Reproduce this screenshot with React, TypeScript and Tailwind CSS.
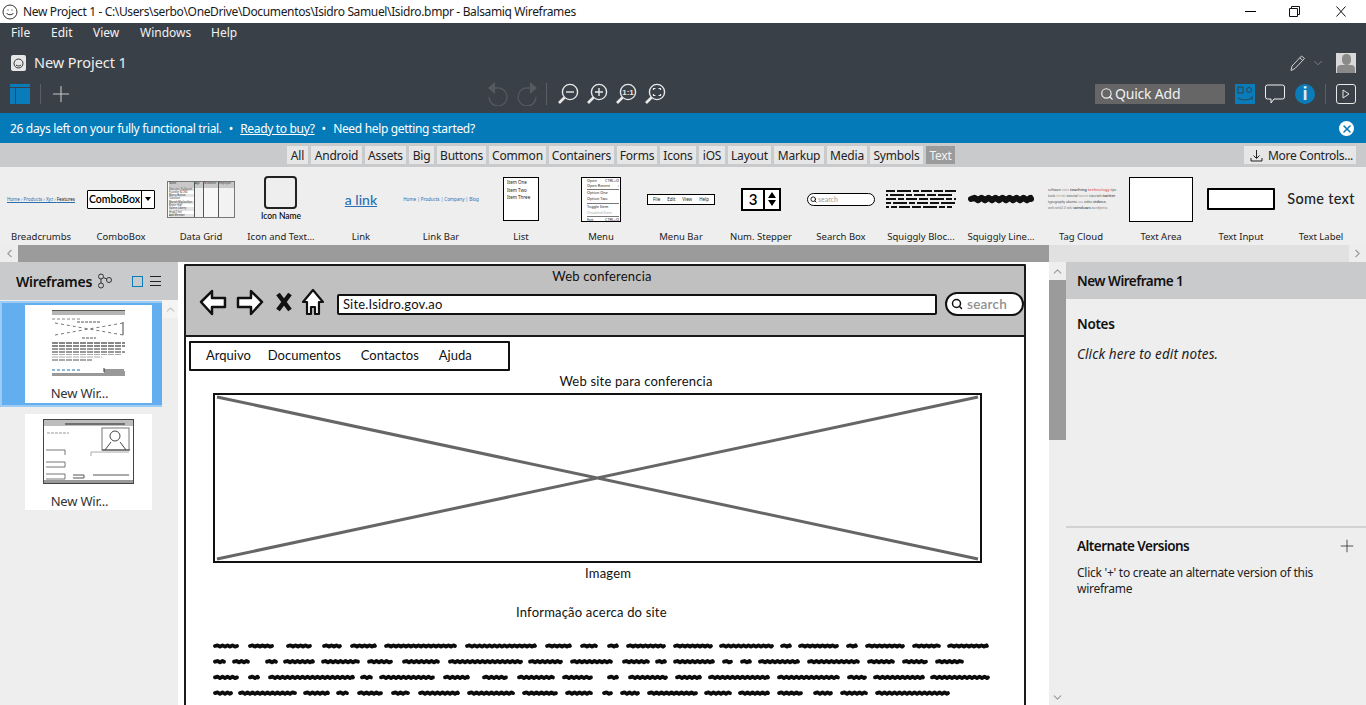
import { Search, Plus, ChevronUp, ChevronDown, ChevronLeft, ChevronRight, X } from "lucide-react";

const ui = "font-['Noto_Sans','Open_Sans',sans-serif]";
const sketch = "font-['Lato','Noto_Sans',sans-serif]";

const tabs = [
  ["All", 21],
  ["Android", 51],
  ["Assets", 41],
  ["Big", 25],
  ["Buttons", 49],
  ["Common", 57],
  ["Containers", 65],
  ["Forms", 40],
  ["Icons", 36],
  ["iOS", 26],
  ["Layout", 43],
  ["Markup", 50],
  ["Media", 40],
  ["Symbols", 53],
];

// start/end x of every squiggly word, measured from the left of the text block, one list per line
const squiggleLines = [
  [[0, 26], [35, 61], [73, 99], [109, 129], [137, 164], [171, 244], [252, 324], [332, 359], [367, 385], [394, 406], [413, 453], [460, 500], [506, 561], [567, 579], [585, 626], [633, 645], [652, 692], [699, 728], [734, 776]],
  [[0, 13], [19, 37], [52, 65], [70, 102], [108, 147], [154, 180], [189, 227], [235, 310], [315, 350], [357, 400], [409, 437], [442, 454], [460, 502], [509, 520], [527, 539], [545, 587], [594, 647], [654, 682], [689, 715], [722, 751]],
  [[0, 26], [35, 47], [55, 142], [147, 160], [166, 222], [230, 257], [269, 295], [304, 342], [349, 380], [394, 406], [415, 455], [462, 489], [495, 557], [564, 627], [634, 654], [660, 712], [717, 777]],
  [[0, 20], [25, 84], [90, 117], [123, 136], [144, 170], [178, 197], [205, 247], [254, 302], [309, 345], [352, 380], [389, 400], [407, 427], [434, 485], [491, 519], [525, 557], [564, 590], [600, 620], [627, 655], [662, 737]],
];

function wavePath(x0: number, x1: number, y: number, step: number, amp: number) {
  let d = `M${x0} ${y}`;
  let up = true;
  for (let x = x0 + step; x < x1; x += step) {
    d += ` L${x} ${up ? y - amp : y + amp}`;
    up = !up;
  }
  return d + ` L${x1} ${y}`;
}

function SquigglyText() {
  return (
    <svg width="780" height="58" className="block" fill="none" stroke="#0c0c0c" strokeWidth="3.800" strokeLinecap="round" strokeLinejoin="round">
      {squiggleLines.map((words, i) =>
        words.map(([a, b], j) => <path key={`${i}-${j}`} d={wavePath(a + 2, b - 2, 5 + i * 15.700, 2.500, 0.700)} />)
      )}
    </svg>
  );
}

function MagGlass({ kind }: { kind: "minus" | "plus" | "one" | "fit" }) {
  return (
    <svg width="22" height="22" viewBox="0 0 22 22" fill="none" stroke="#e8e8e8" strokeWidth="1.400">
      <circle cx="13" cy="9" r="7.600" />
      <path d="M7.500 14.500 L2 20" strokeWidth="2.600" />
      {kind === "minus" && <path d="M9 9h8" />}
      {kind === "plus" && <path d="M9 9h8M13 5v8" />}
      {kind === "one" && <text x="13" y="12" textAnchor="middle" fontSize="8" fontWeight="700" fill="#e8e8e8" stroke="none" fontFamily="Liberation Sans">1:1</text>}
      {kind === "fit" && <path d="M9.500 7V5.500H11.500M14.500 5.500H16.500V7M16.500 11V12.500H14.500M11.500 12.500H9.500V11" strokeWidth="1.200" />}
    </svg>
  );
}

function TopBars() {
  return (
    <>
      {/* window title bar */}
      <div className={`${ui} h-[23px] bg-white flex items-center text-[12px] text-[#1a1a1a]`}>
        <svg width="16" height="16" viewBox="0 0 16 16" className="ml-[2px] mr-[5px]" fill="none" stroke="#333">
          <circle cx="8" cy="8" r="7" />
          <path d="M4.500 9c1.200 2.300 5.800 2.300 7 0" />
          <path d="M5.500 6h1M9.500 6h1" />
        </svg>
        <span className="tracking-[-0.36px]">New Project 1 - C:\Users\serbo\OneDrive\Documentos\Isidro Samuel\Isidro.bmpr - Balsamiq Wireframes</span>
        <div className="ml-auto flex items-center mr-[20px]">
          <div className="w-[11px] h-px bg-black mr-[33px]" />
          <svg width="11" height="11" viewBox="0 0 11 11" fill="none" stroke="#111" className="mr-[36px]">
            <path d="M.5 2.500h8v8h-8zM2.500 2.500v-2h8v8h-2" />
          </svg>
          <svg width="10" height="11" viewBox="0 0 10 11" fill="none" stroke="#111">
            <path d="M.5 .5l9 10M9.500 .5l-9 10" />
          </svg>
        </div>
      </div>

      {/* dark application chrome */}
      <div className={`${ui} h-[90px] bg-[#3a4047] text-white relative`}>
        <div className="flex h-[20px] items-center text-[12px] pl-[11px] text-[#f2f2f2]">
          <span className="w-[40px]">File</span>
          <span className="w-[42px]">Edit</span>
          <span className="w-[47px]">View</span>
          <span className="w-[71px]">Windows</span>
          <span>Help</span>
        </div>
        <div className="flex h-[22px] mt-[9px] items-center pl-[11px] pr-[10px]">
          <svg width="15" height="16" viewBox="0 0 15 16" fill="none">
            <rect width="15" height="16" rx="2" fill="#e6e6e6" />
            <circle cx="7.500" cy="8.500" r="4.500" stroke="#333" />
            <path d="M5 10c1.200 1.300 3.800 1.300 5 0" stroke="#333" />
          </svg>
          <span className="ml-[8px] text-[14.500px] text-[#eeeeee] tracking-[-0.05px]">New Project 1</span>
          <svg width="18" height="18" viewBox="0 0 18 18" fill="none" stroke="#d0d0d0" className="ml-auto mr-[4px]">
            <path d="M2 16.500l1-4.500L12.500 2l3 2.500L6 14.500z" />
            <path d="M10.800 3.800l3 2.700" />
          </svg>
          <ChevronDown size={14} className="text-[#9a9a9a] mr-[11px]" strokeWidth={1.200} />
          <div className="w-[20px] h-[20px] bg-[#d8d8d8] overflow-hidden flex flex-col items-center">
            <div className="w-[9px] h-[11px] mt-[1px] rounded-full bg-[#8a8a8a]" />
            <div className="w-[18px] h-[8px] rounded-t-[4px] bg-[#8a8a8a]" />
          </div>
        </div>
        <div className="flex h-[24px] mt-[8px] items-center pl-[10px]">
          <div className="w-[20px] h-[20px] bg-[#0a7cba] flex flex-col">
            <div className="h-[4px] border-b border-[#3a4047]" />
            <div className="flex-1 flex">
              <div className="w-[6px] border-r border-[#3a4047]" />
            </div>
          </div>
          <div className="w-px h-[20px] bg-[#5b6067] ml-[10px]" />
          <Plus size={26} strokeWidth={1} className="text-[#c8c8c8] ml-[7px]" />
          <svg width="23" height="24" viewBox="0 0 23 24" fill="none" className="ml-[412px]">
            <path d="M2 6l7-6v12z" fill="#565a60" />
            <path d="M8 6h3a9 9 0 1 1-8 9" stroke="#565a60" strokeWidth="1.300" />
          </svg>
          <svg width="23" height="24" viewBox="0 0 23 24" fill="none" className="ml-[7px]">
            <path d="M21 6l-7-6v12z" fill="#565a60" />
            <path d="M15 6h-3a9 9 0 1 0 8 9" stroke="#565a60" strokeWidth="1.300" />
          </svg>
          <div className="w-px h-[22px] bg-[#5b6067] ml-[7px] mr-[10px]" />
          <div className="flex gap-[7px]">
            <MagGlass kind="minus" />
            <MagGlass kind="plus" />
            <MagGlass kind="one" />
            <MagGlass kind="fit" />
          </div>
          <div className="ml-[429px] w-[130px] h-[20px] bg-[#666666] flex items-center pl-[5px] pb-[1px] text-[#f0f0f0] text-[14px]">
            <Search size={14} strokeWidth={2} />
            <span className="ml-[1px] tracking-[-0.2px]">Quick Add</span>
          </div>
          <div className="ml-[10px] w-[20px] h-[20px] bg-[#0a7cba] relative">
            <svg width="20" height="20" viewBox="0 0 20 20" fill="none" stroke="#33404a">
              <rect x="3" y="3" width="5" height="6" />
              <circle cx="14" cy="6" r="2.500" />
              <path d="M3 14c4 2.500 9 2.500 14 0M17 12v4" />
            </svg>
          </div>
          <svg width="20" height="20" viewBox="0 0 20 20" fill="none" stroke="#f0f0f0" className="ml-[10px]">
            <path d="M2.500 1h15a2 2 0 0 1 2 2v10a2 2 0 0 1-2 2H9l-3 4v-4H2.500a2 2 0 0 1-2-2V3a2 2 0 0 1 2-2z" />
          </svg>
          <div className="ml-[10px] w-[20px] h-[20px] rounded-full bg-[#0a7cba] flex items-center justify-center text-[#dfe9f0] text-[17px] font-bold">
            i
          </div>
          <div className="w-px h-[20px] bg-[#5b6067] ml-[10px]" />
          <div className="ml-[10px] w-[20px] h-[20px] rounded-[3px] border border-[#e8e8e8] flex items-center justify-center">
            <svg width="8" height="10" viewBox="0 0 8 10" fill="none" stroke="#e8e8e8">
              <path d="M1 1l6 4-6 4z" />
            </svg>
          </div>
        </div>
      </div>

      {/* trial notice */}
      <div className={`${ui} h-[30px] bg-[#057ab9] text-white text-[12px] flex items-center pl-[10px] pr-[12px] pt-[1px]`}>
        <span className="tracking-[-0.33px]">26 days left on your fully functional trial.</span>
        <span className="mx-[7px]">•</span>
        <span className="underline tracking-[-0.33px]">Ready to buy?</span>
        <span className="mx-[7px]">•</span>
        <span className="tracking-[-0.33px]">Need help getting started?</span>
        <div className="ml-auto w-[15px] h-[15px] rounded-full bg-white flex items-center justify-center">
          <X size={12} strokeWidth={3} className="text-[#057ab9]" />
        </div>
      </div>
    </>
  );
}

const gridRows = ["Giacomo Guilizzoni", "Founder & CEO", "Marco Botton", "Tuttofare", "Mariah Maclachlan", "Better Half", "Valerie Liberty", "Head Chef", "Add Member"];

function ControlPreview({ name }: { name: string }) {
  switch (name) {
    case "Breadcrumbs":
      return (
        <div className="text-[4.500px] whitespace-nowrap text-[#2a6fb0] underline">Home › Products › Xyz › <span className="text-[#222] no-underline">Features</span></div>
      );
    case "ComboBox":
      return (
        <div className={`${sketch} flex w-[68px] h-[19px] bg-white border-[1.500px] border-black rounded-[1px] text-[10.500px] text-black font-semibold`}>
          <span className="flex-1 text-center leading-[16px]">ComboBox</span>
          <span className="w-[13px] border-l-[1.500px] border-black flex items-center justify-center">
            <span className="border-x-[3.500px] border-x-transparent border-t-[4px] border-t-black" />
          </span>
        </div>
      );
    case "Data Grid":
      return (
        <div className="w-[68px] h-[37px] bg-white border border-[#777] flex text-[2.600px] leading-[3.300px] text-[#333] whitespace-nowrap">
          <div className="w-[27px] border-r border-[#555] pl-px">
            <div className="bg-[#c8c8c8] h-[6px]">Name</div>
            {gridRows.map((r, i) => (
              <div key={r} className={i % 2 ? "bg-white" : "bg-[#e4e4e4]"}>{r}</div>
            ))}
          </div>
          <div className="w-[9px] border-r border-[#555] bg-[#f2f2f2]"><div className="bg-[#c8c8c8] h-[6px]">Age</div></div>
          <div className="w-[15px] border-r border-[#555] bg-[#f8f8f8]"><div className="bg-[#c8c8c8] h-[6px]">Nickname</div></div>
          <div className="flex-1 bg-[#f2f2f2]"><div className="bg-[#c8c8c8] h-[6px]">Employee</div></div>
        </div>
      );
    case "Icon and Text...":
      return (
        <div className={`${sketch} flex flex-col items-center mt-[-1px]`}>
          <div className="w-[33px] h-[33px] border-2 border-[#222] rounded-[4px] bg-[#eeeeee]" />
          <span className="text-[8.500px] mt-[1px] leading-[12px] text-black font-medium">Icon Name</span>
        </div>
      );
    case "Link":
      return <span className={`${sketch} text-[#2a6fb0] text-[14px] underline font-medium`}>a link</span>;
    case "Link Bar":
      return <div className="text-[4.500px] whitespace-nowrap text-[#2a6fb0]">Home | Products | Company | Blog</div>;
    case "List":
      return (
        <div className="w-[36px] h-[44px] bg-white border border-black text-[4.500px] leading-[7.500px] pl-[3px] pt-[1px] text-[#222]">
          Item One<br />Item Two<br />Item Three
        </div>
      );
    case "Menu":
      return (
        <div className="w-[40px] h-[45px] bg-white border border-black text-[3.800px] leading-[5.700px] text-[#222] pl-[5px] pr-px">
          <div className="flex justify-between"><span>Open</span><span>CTRL+O</span></div>
          <div className="flex justify-between border-b border-[#777]"><span>Open Recent</span><span>›</span></div>
          <div>Option One</div>
          <div className="border-b border-[#777] pb-[2px]">Option Two</div>
          <div>Toggle Item</div>
          <div className="text-[#aaa] border-b border-[#777]">Disabled Item</div>
          <div className="flex justify-between"><span>Exit</span><span>CTRL+Q</span></div>
        </div>
      );
    case "Menu Bar":
      return (
        <div className="w-[68px] h-[11px] bg-white border border-black text-[4.500px] text-[#222] flex items-center justify-center gap-[7px]">
          <span>File</span><span>Edit</span><span>View</span><span>Help</span>
        </div>
      );
    case "Num. Stepper":
      return (
        <div className={`${sketch} flex w-[40px] h-[23px] bg-white border-2 border-black text-[15px] font-semibold text-black`}>
          <span className="flex-1 text-center leading-[19px]">3</span>
          <span className="w-[16px] border-l-2 border-black flex flex-col items-center justify-center gap-[2px]">
            <span className="border-x-[4.500px] border-x-transparent border-b-[6px] border-b-black" />
            <span className="border-x-[4.500px] border-x-transparent border-t-[6px] border-t-black" />
          </span>
        </div>
      );
    case "Search Box":
      return (
        <div className={`${sketch} flex items-center w-[68px] h-[13px] bg-white border border-black rounded-full text-[7px] text-[#9a9a9a] pl-[2px]`}>
          <Search size={7} strokeWidth={3} className="text-black" />
          <span className="ml-px">search</span>
        </div>
      );
    case "Squiggly Bloc...":
      return (
        <svg width="70" height="20" className="block" fill="none" stroke="#111" strokeWidth="2" strokeDasharray="9 2 14 2 6 2 11 2">
          <path d="M0 2h70" strokeDashoffset="0" />
          <path d="M0 6h68" strokeDashoffset="7" />
          <path d="M0 10h70" strokeDashoffset="15" />
          <path d="M0 14h69" strokeDashoffset="4" />
          <path d="M0 18h66" strokeDashoffset="22" />
        </svg>
      );
    case "Squiggly Line...":
      return (
        <svg width="66" height="14" className="block" fill="none" stroke="#111" strokeWidth="6" strokeLinecap="round" strokeLinejoin="round">
          <path d={wavePath(3, 63, 7, 3.500, 1.200)} />
        </svg>
      );
    case "Tag Cloud":
      return (
        <div className="w-[66px] text-[3.200px] leading-[6px] text-[#444] whitespace-nowrap">
          <div>software <span className="text-[#999]">stats</span> <span className="text-[4.200px] text-[#222]">teaching</span> <span className="text-[4.200px] text-[#d33]">technology</span> tips</div>
          <div>tools <span className="text-[#999]">trends</span> tutorial <span className="text-[#999]">tweets</span> tutorials <span className="text-[4.200px] text-[#222]">twitter</span></div>
          <div>typography ubuntu <span className="text-[#999]">usa</span> video <span className="text-[4.200px] text-[#222]">videos</span></div>
          <div className="text-[#777]">web web2.0 wiki <span className="text-[4.200px] text-[#222]">windows</span> wordpress</div>
        </div>
      );
    case "Text Area":
      return <div className="w-[64px] h-[45px] bg-white border border-black" />;
    case "Text Input":
      return <div className="w-[68px] h-[22px] bg-white border-2 border-black rounded-[1px]" />;
    default:
      return <span className={`${sketch} text-[14.500px] text-[#222] font-medium tracking-[0.3px]`}>Some text</span>;
  }
}

const controls = [
  "Breadcrumbs", "ComboBox", "Data Grid", "Icon and Text...", "Link", "Link Bar", "List", "Menu", "Menu Bar",
  "Num. Stepper", "Search Box", "Squiggly Bloc...", "Squiggly Line...", "Tag Cloud", "Text Area", "Text Input", "Text Label",
];

function ControlLibrary() {
  return (
    <div className={ui}>
      <div className="h-[24px] bg-[#c9cacb] flex items-center pl-[287px] pr-[10px] text-[12px] text-[#222]">
        <div className="flex gap-[3px]">
          {tabs.map(([t, w]) => (
            <span key={t as string} className="h-[18px] bg-[#e6e6e6] flex items-center justify-center tracking-[-0.2px] pt-[2px]" style={{ width: w as number }}>
              {t}
            </span>
          ))}
          <span className="h-[18px] w-[29px] bg-[#9b9b9b] text-[#f4f4f4] flex items-center justify-center tracking-[-0.2px] pt-[2px]">Text</span>
        </div>
        <div className="ml-auto w-[112px] h-[18px] bg-[#e6e6e6] flex items-center pl-[6px] tracking-[-0.3px] pt-[2px]">
          <svg width="13" height="13" viewBox="0 0 13 13" fill="none" stroke="#222" className="mr-[5px] mt-[-2px]">
            <path d="M6.500 1v8M3.500 6.500l3 3 3-3M1 9v3h11V9" />
          </svg>
          More Controls...
        </div>
      </div>
      <div className="h-[78px] bg-[#eeeeee] grid grid-cols-[repeat(17,80px)] pl-px">
        {controls.map((c) => (
          <div key={c} className="flex flex-col items-center">
            <div className="h-[60px] pt-[4px] flex items-center justify-center">
              <ControlPreview name={c} />
            </div>
            <span className="text-[9.500px] mt-[4px] leading-[12px] text-[#222] whitespace-nowrap">{c}</span>
          </div>
        ))}
      </div>
      <div className="h-[17px] flex bg-[#e1e1e1]">
        <div className="w-[18px] bg-[#ededed] flex items-center justify-center">
          <ChevronLeft size={13} className="text-[#9a9a9a]" />
        </div>
        <div className="w-[1031px] bg-[#9b9b9b]" />
        <div className="flex-1" />
        <div className="w-[17px] bg-[#ededed] flex items-center justify-center">
          <ChevronRight size={13} className="text-[#9a9a9a]" />
        </div>
      </div>
    </div>
  );
}

function MiniPage() {
  return (
    <svg width="73" height="67" viewBox="0 0 73 67" className="block" fill="none">
      <rect x="0" y="0" width="73" height="5" fill="#b5b5b5" />
      <path d="M0 .5h73" stroke="#555" />
      <path d="M0 9h30" stroke="#888" strokeDasharray="3 2" />
      <path d="M71 12V25" stroke="#444" />
      <path d="M3 13L71 25M71 13L3 25" stroke="#777" strokeDasharray="3 3" />
      <path d="M25 12h24M30 28h14" stroke="#555" strokeDasharray="3 1" />
      <path d="M0 33h73M0 36h73" stroke="#111" strokeDasharray="6 1" />
      <path d="M0 39h70M0 42h73" stroke="#333" strokeDasharray="6 1" />
      <path d="M0 44.500h70M0 47h50" stroke="#aaa" strokeDasharray="6 1" />
      <path d="M0 50h40" stroke="#555" strokeDasharray="6 1" />
      <path d="M0 60h30" stroke="#1a6fb0" strokeDasharray="3 2" />
      <path d="M52 58v4h21M52 60h20" stroke="#333" />
      <rect x="0" y="63" width="73" height="3" fill="#999" />
    </svg>
  );
}

function MiniPageTwo() {
  return (
    <svg width="91" height="65" viewBox="0 0 91 65" className="block" fill="none" stroke="#444">
      <rect x=".5" y=".5" width="90" height="64" />
      <rect x="1" y="1" width="89" height="6" fill="#bdbdbd" stroke="none" />
      <path d="M22 5h60" stroke="#222" />
      <rect x="59" y="9" width="27" height="22" stroke="#777" />
      <circle cx="72" cy="17" r="5" />
      <path d="M62 31l6-8M83 31l-6-8M59 31h28" />
      <path d="M48 33h38M48 33v4" stroke="#aaa" />
      <path d="M4 14h22" stroke="#999" strokeDasharray="3 1" />
      <path d="M3 31h19v5M3 43h19v5H3M3 55h19v5H3" stroke="#777" />
      <path d="M30 56h11v3H30M50 56h36" stroke="#555" />
      <rect x="1" y="61" width="89" height="3" fill="#999" stroke="none" />
    </svg>
  );
}

function LeftPanel() {
  return (
    <div className={`${ui} w-[178px] shrink-0 bg-[#eeeeee] flex flex-col`}>
      <div className="h-[38px] bg-[#c9cacb] flex items-center pl-[16px] pr-[17px]">
        <span className="text-[14px] font-semibold text-[#111] tracking-[-0.3px]">Wireframes</span>
        <svg width="18" height="16" viewBox="0 0 18 16" fill="none" stroke="#333" className="ml-[5px]">
          <circle cx="4" cy="3.500" r="2.500" />
          <circle cx="12" cy="7" r="2.500" />
          <circle cx="4" cy="12.500" r="2.500" />
          <path d="M6.300 4.500l3.500 1.500M4 6v4" />
        </svg>
        <div className="ml-auto w-[11px] h-[11px] border-[1.500px] border-[#0a7cba]" />
        <div className="ml-[7px] w-[11px] h-[10px] border-y border-[#222] flex items-center">
          <div className="w-full h-px bg-[#222]" />
        </div>
      </div>
      <div className="flex flex-1 min-h-0">
        <div className="w-[162px] flex flex-col">
          <div className="mt-px h-[106px] bg-[#63aeee] border-2 border-[#9ccbf3] border-r-0 flex items-start">
            <div className="w-[127px] h-[98px] ml-[23px] mt-[2px] bg-white flex flex-col items-center pt-[5px]">
              <MiniPage />
              <span className="text-[13px] leading-[18px] mt-[7px] pr-[18px] text-[#333] tracking-[-0.2px]">New Wir...</span>
            </div>
          </div>
          <div className="w-[127px] h-[96px] ml-[25px] mt-[7px] bg-white flex flex-col items-center pt-[5px]">
            <MiniPageTwo />
            <span className="text-[13px] leading-[18px] mt-[8px] pr-[18px] text-[#333] tracking-[-0.2px]">New Wir...</span>
          </div>
        </div>
        <div className="w-[16px] flex flex-col items-center">
          <div className="w-full h-[18px] bg-[#f4f4f4] flex items-center justify-center">
            <ChevronUp size={13} className="text-[#c4c4c4]" />
          </div>
        </div>
      </div>
    </div>
  );
}

function Canvas() {
  return (
    <div className="flex-1 min-w-0 bg-white overflow-hidden pl-[6px] pt-[2px]">
      <div className={`${sketch} w-[842px] h-[500px] border-2 border-[#1a1a1a] rounded-[1px] text-[#111] text-[13px] tracking-[0.2px]`}>
        {/* browser chrome */}
        <div className="h-[71px] bg-[#c0c0c0] border-b-2 border-[#1a1a1a]">
          <div className="text-center leading-[20px] pr-[6px]">Web conferencia</div>
          <div className="flex items-center mt-[2px] pl-[13px]">
            <svg width="28" height="27" viewBox="0 0 28 27" fill="#fff" stroke="#111" strokeWidth="2.500" strokeLinejoin="round">
              <path d="M13 2L2 13l11 12v-7h13V9H13z" />
            </svg>
            <svg width="28" height="27" viewBox="0 0 28 27" fill="#fff" stroke="#111" strokeWidth="2.500" strokeLinejoin="round" className="ml-[9px]">
              <path d="M15 2l11 11-11 12v-7H2V9h13z" />
            </svg>
            <svg width="16" height="20" viewBox="0 0 16 20" stroke="#111" strokeWidth="4.500" className="ml-[12px]">
              <path d="M2 2l12 16M14 2L2 18" />
            </svg>
            <svg width="24" height="28" viewBox="0 0 24 28" fill="#fff" stroke="#111" strokeWidth="2.200" strokeLinejoin="round" className="ml-[9px]">
              <path d="M12 2L2 14h4v12h4v-7h4v7h4V14h4z" />
            </svg>
            <div className="ml-[12px] mt-[4px] w-[601px] h-[21px] bg-white border-2 border-[#111] rounded-[2px] pl-[4px] leading-[17px]">
              Site.Isidro.gov.ao
            </div>
            <div className="ml-[8px] mt-[4px] w-[79px] h-[24px] bg-white border-2 border-[#111] rounded-full flex items-center pl-[4px] text-[#8f8f8f] font-semibold">
              <Search size={12} strokeWidth={3} className="text-[#111]" />
              <span className="ml-[4px] text-[13.500px]">search</span>
            </div>
          </div>
        </div>

        {/* menu bar */}
        <div className="ml-[3px] mt-[4px] w-[321px] h-[30px] border-2 border-[#111] rounded-[1px] flex items-center pl-[15px] tracking-normal">
          <span>Arquivo</span>
          <span className="ml-[17px]">Documentos</span>
          <span className="ml-[20px]">Contactos</span>
          <span className="ml-[20px]">Ajuda</span>
        </div>

        <div className="text-center leading-[16px] mt-[2px] pl-[62px]">Web site para conferencia</div>

        {/* image placeholder */}
        <div className="ml-[27px] mt-[4px] w-[769px] h-[170px] border-2 border-[#111]">
          <svg width="765" height="166" className="block" stroke="#666" strokeWidth="3">
            <path d="M2 2L763 164M763 2L2 164" />
          </svg>
        </div>
        <div className="leading-[20px] pl-[399px]">Imagem</div>
        <div className="leading-[20px] pl-[330px] mt-[19px]">Informação acerca do site</div>

        {/* squiggly text */}
        <div className="ml-[27px] mt-[19px]">
          <SquigglyText />
        </div>
      </div>
    </div>
  );
}

function RightPanel() {
  return (
    <div className={`${ui} w-[300px] shrink-0 bg-[#eeeeee] flex flex-col text-[#222]`}>
      <div className="h-[37px] bg-[#c9cacb] flex items-center pl-[11px] pt-[2px] text-[13.500px] font-semibold text-[#111] tracking-[-0.5px]">New Wireframe 1</div>
      <div className="h-[229px] pl-[11px] pt-[15px] border-b-2 border-[#d2d2d2]">
        <div className="text-[13.500px] font-semibold text-[#111] tracking-[-0.3px]">Notes</div>
        <div className="text-[13.500px] italic mt-[10px] tracking-[0.1px]">Click here to edit notes.</div>
      </div>
      <div className="pl-[11px] pr-[9px] pt-[8px]">
        <div className="flex items-center justify-between">
          <span className="text-[13.500px] font-semibold text-[#111] tracking-[-0.52px]">Alternate Versions</span>
          <Plus size={20} strokeWidth={1} className="text-[#333]" />
        </div>
        <div className="text-[12px] leading-[16px] mt-[9px] tracking-[-0.26px] w-[250px]">Click '+' to create an alternate version of this wireframe</div>
      </div>
    </div>
  );
}

export default function App() {
  return (
    <div className="w-[1366px] h-[705px] overflow-hidden flex flex-col bg-white">
      <TopBars />
      <ControlLibrary />
      <div className="flex flex-1 min-h-0">
        <LeftPanel />
        <Canvas />
        {/* canvas scrollbar */}
        <div className="w-[17px] shrink-0 bg-[#eeeeee] flex flex-col">
          <div className="h-[18px] flex items-center justify-center">
            <ChevronUp size={13} className="text-[#9a9a9a]" />
          </div>
          <div className="h-[160px] bg-[#9b9b9b]" />
          <div className="mt-auto h-[16px] flex items-center justify-center">
            <ChevronDown size={13} className="text-[#9a9a9a]" />
          </div>
        </div>
        <RightPanel />
      </div>
    </div>
  );
}
